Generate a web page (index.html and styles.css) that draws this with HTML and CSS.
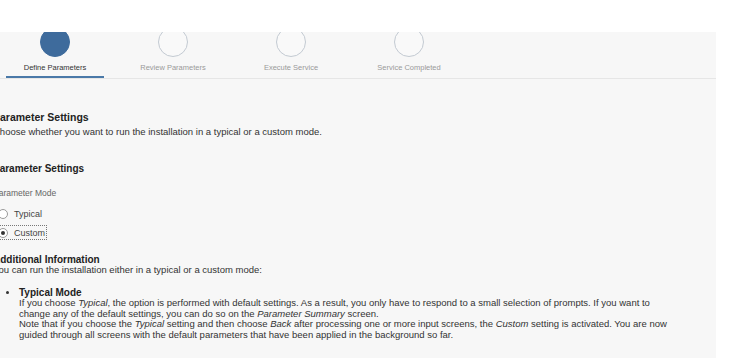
FILE: index.html
```html
<!DOCTYPE html>
<html lang="en">
<head>
  <meta charset="UTF-8" />
  <title>Parameter Settings</title>
  <link rel="stylesheet" href="styles.css">
</head>
<body>
  <div class="panel">
    <div class="steps">
      <div class="step active">
        <div class="step-dot"></div>
        <div class="step-label">Define Parameters</div>
      </div>
      <div class="step">
        <div class="step-dot"></div>
        <div class="step-label">Review Parameters</div>
      </div>
      <div class="step">
        <div class="step-dot"></div>
        <div class="step-label">Execute Service</div>
      </div>
      <div class="step">
        <div class="step-dot"></div>
        <div class="step-label">Service Completed</div>
      </div>
    </div>
    <div class="tab-line"><div class="tab-marker"></div></div>

    <div class="content">
      <h1>Parameter Settings</h1>
      <p class="intro">Choose whether you want to run the installation in a typical or a custom mode.</p>

      <h2>Parameter Settings</h2>
      <div class="field-label">Parameter Mode</div>
      <label class="radio"><span class="radio-box"></span>Typical</label>
      <label class="radio checked focus"><span class="radio-box"></span>Custom</label>

      <div class="info">
        <h3>Additional Information</h3>
        <p>You can run the installation either in a typical or a custom mode:</p>
        <ul>
          <li>
            <strong>Typical Mode</strong><br>
            If you choose <em>Typical</em>, the option is performed with default settings. As a result, you only have to respond to a small selection of prompts. If you want to<br>
            change any of the default settings, you can do so on the <em>Parameter Summary</em> screen.<br>
            Note that if you choose the <em>Typical</em> setting and then choose <em>Back</em> after processing one or more input screens, the <em>Custom</em> setting is activated. You are now<br>
            guided through all screens with the default parameters that have been applied in the background so far.
          </li>
        </ul>
      </div>
    </div>
  </div>
</body>
</html>
```

FILE: styles.css
```css
html, body {
  margin: 0;
  padding: 0;
  background: #fff;
}
*, *::before, *::after {
  box-sizing: border-box;
}
body {
  font-family: 'Liberation Sans', Arial, sans-serif;
  color: #333;
}

.panel {
  margin-top: 32px;
  width: 716px;
  height: 326px;
  background: #f7f7f7;
  overflow: hidden;
}

/* wizard steps */
.steps {
  display: flex;
  margin-left: -4px;
  margin-top: -5px;
}
.step {
  width: 118px;
  display: flex;
  flex-direction: column;
  align-items: center;
}
.step-dot {
  width: 30px;
  height: 30px;
  border-radius: 50%;
  border: 1px solid #c3cad2;
  background: #f9f9f9;
}
.step.active .step-dot {
  background: #3e6b9c;
  border-color: #3e6b9c;
}
.step-label {
  margin-top: 6px;
  font-size: 7.5px;
  line-height: 9px;
  color: #9a9a9a;
}
.step.active .step-label {
  color: #333;
}

.tab-line {
  margin-top: 4px;
  border-bottom: 1px solid #e6e6e6;
}
.tab-marker {
  width: 98px;
  height: 2px;
  margin-left: 6px;
  background: #4a79a8;
}

/* page content */
.content {
  margin-left: -7px;
  padding-top: 32px;
}
h1 {
  margin: 0;
  font-size: 10.5px;
  line-height: 13px;
  color: #222;
}
.intro {
  margin: 2px 0 0;
  font-size: 9.5px;
  line-height: 11px;
}
h2 {
  margin: 26px 0 0;
  font-size: 10px;
  line-height: 12px;
  color: #222;
}
.field-label {
  margin-top: 13px;
  font-size: 8.5px;
  line-height: 11px;
  color: #666;
}
.radio {
  display: flex;
  align-items: center;
  width: fit-content;
  margin-top: 9px;
  margin-left: 5px;
  height: 11px;
  font-size: 9px;
  color: #444;
}
.radio + .radio {
  margin-top: 8px;
}
.radio-box {
  width: 10px;
  height: 10px;
  border-radius: 50%;
  border: 1px solid #9a9a9a;
  background: #fff;
  margin-right: 6px;
  display: flex;
  align-items: center;
  justify-content: center;
}
.radio.checked .radio-box::after {
  content: '';
  width: 4px;
  height: 4px;
  border-radius: 50%;
  background: #333;
}
.focus {
  outline: 1px dotted #777;
  outline-offset: 1px;
}

.info {
  margin-top: 16px;
  font-size: 9.5px;
  line-height: 10.5px;
}
h3 {
  margin: 0;
  font-size: 10px;
  line-height: 11px;
  color: #222;
}
.info p {
  margin: 0;
}
.info ul {
  margin: 12px 0 0;
  padding-left: 26px;
  white-space: nowrap;
}
.info li strong {
  font-size: 10px;
  color: #222;
}
```
